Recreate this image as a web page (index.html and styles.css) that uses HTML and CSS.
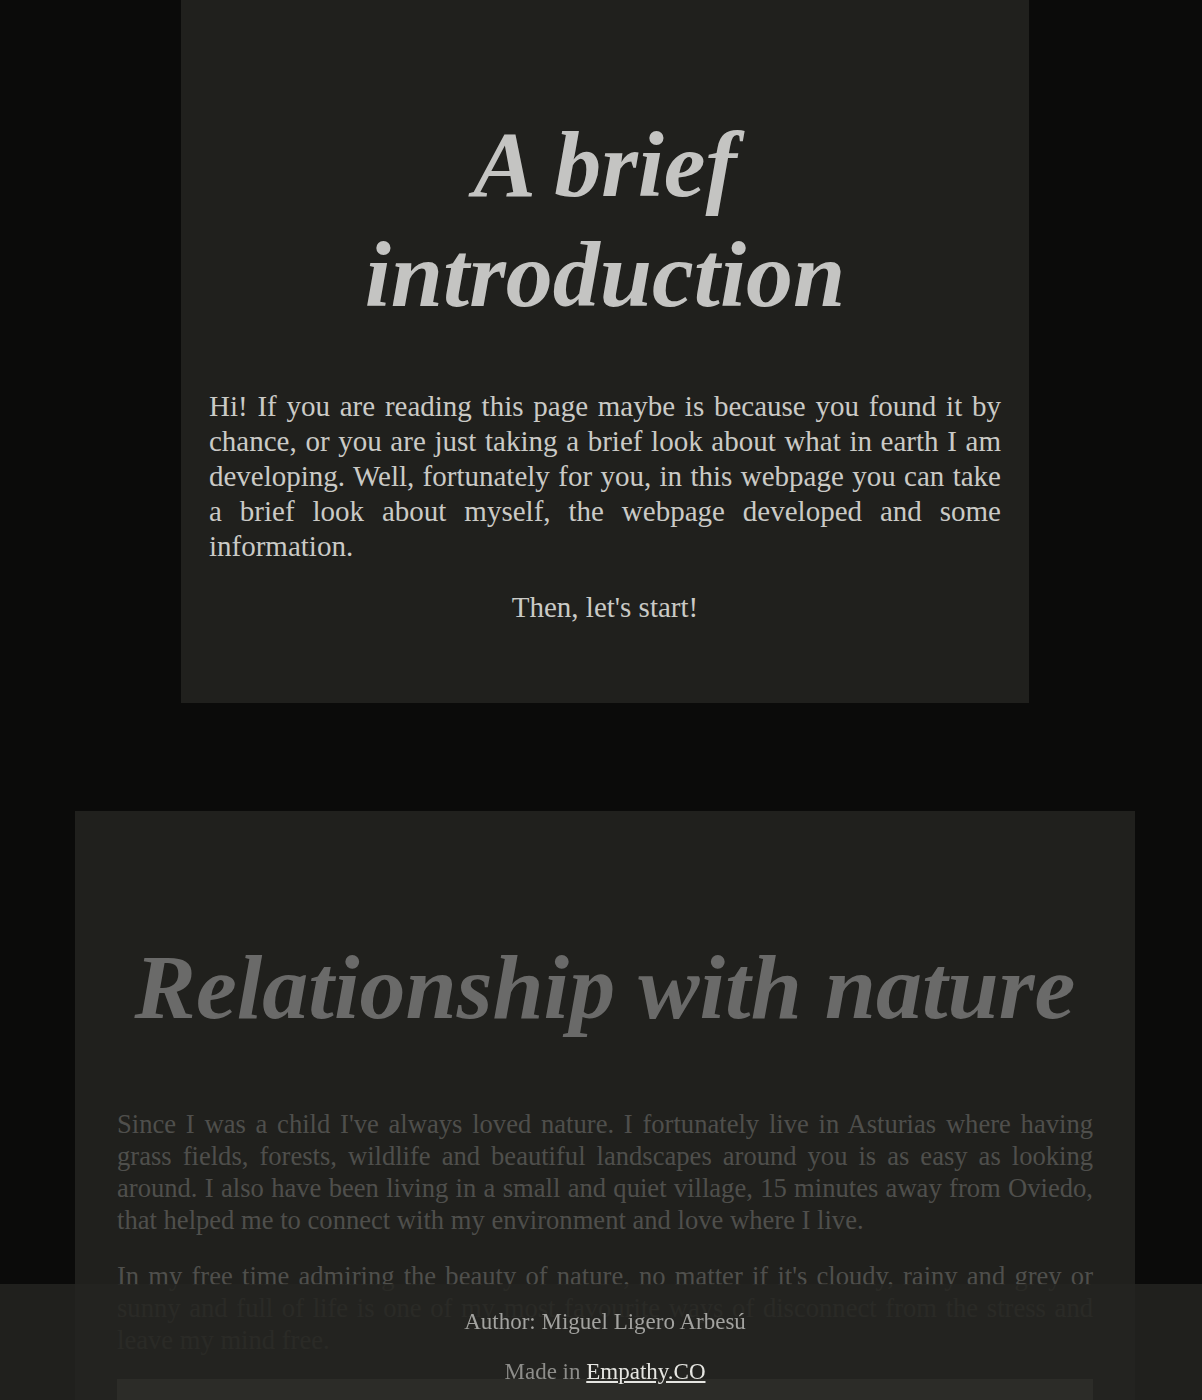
FILE: index.html
```html
<!DOCTYPE html>
<html lang="en">
<head>
<meta charset="utf-8">
<title>A brief introduction</title>
<link rel="stylesheet" href="styles.css">
</head>
<body>
<main class="page">
  <section class="card card-intro">
    <h1 class="title">A brief introduction</h1>
    <p class="text text-justify">Hi! If you are reading this page maybe is because you found it by chance, or you are just taking a brief look about what in earth I am developing. Well, fortunately for you, in this webpage you can take a brief look about myself, the webpage developed and some information.</p>
    <p class="text text-center">Then, let's start!</p>
  </section>
  <section class="card card-nature">
    <h2 class="subtitle">Relationship with nature</h2>
    <p class="text-dim">Since I was a child I've always loved nature. I fortunately live in Asturias where having grass fields, forests, wildlife and beautiful landscapes around you is as easy as looking around. I also have been living in a small and quiet village, 15 minutes away from Oviedo, that helped me to connect with my environment and love where I live.</p>
    <p class="text-dim">In my free time admiring the beauty of nature, no matter if it's cloudy, rainy and grey or sunny and full of life is one of my most favourite ways of disconnect from the stress and leave my mind free.</p>
    <div class="photo"></div>
  </section>
</main>
<footer class="footer">
  <p class="footer-author">Author: Miguel Ligero Arbesú</p>
  <p class="footer-made">Made in <a class="footer-link" href="#">Empathy.CO</a></p>
</footer>
</body>
</html>
```
FILE: styles.css
```css
html, body {
  margin: 0;
  padding: 0;
}
body {
  background: #0b0b0a;
  font-family: "Liberation Serif", "Times New Roman", serif;
}
.page {
  padding-left: 8px;
  display: flex;
  flex-direction: column;
  align-items: center;
  gap: 108px;
}
.card {
  background: #20201d;
  box-sizing: border-box;
}
.card-intro {
  width: 848px;
  padding: 109px 28px 78px;
}
.title {
  margin: 0 auto;
  max-width: 520px;
  font-size: 94px;
  line-height: 110px;
  font-style: italic;
  font-weight: 700;
  color: #c4c4c2;
  text-align: center;
}
.text {
  margin: 60px 0 0;
  font-size: 29px;
  line-height: 35px;
  color: #cacac6;
}
.text-justify {
  text-align: justify;
}
.text-center {
  text-align: center;
  margin-top: 26px;
}
.card-nature {
  width: 1060px;
  padding: 121px 42px 200px;
}
.subtitle {
  margin: 0;
  font-size: 92px;
  line-height: 110px;
  font-style: italic;
  font-weight: 700;
  color: #6a6a69;
  text-align: center;
}
.text-dim {
  margin: 24px 0 0;
  font-size: 26.6px;
  line-height: 32px;
  color: #4f4f4c;
  text-align: justify;
}
.card-nature .subtitle + .text-dim {
  margin-top: 66px;
}
.photo {
  margin-top: 23px;
  height: 300px;
  background: #5b5c58;
}
.footer {
  position: fixed;
  left: 0;
  right: 0;
  bottom: 0;
  height: 116px;
  box-sizing: border-box;
  padding: 25px 0 0 8px;
  background: rgba(36, 36, 33, 0.86);
  text-align: center;
  font-size: 23px;
  line-height: 26px;
}
.footer-author {
  margin: 0;
  color: #a3a3a0;
}
.footer-made {
  margin: 24px 0 0;
  color: #8d8d8a;
}
.footer-link {
  color: #e6e6e2;
}
```
